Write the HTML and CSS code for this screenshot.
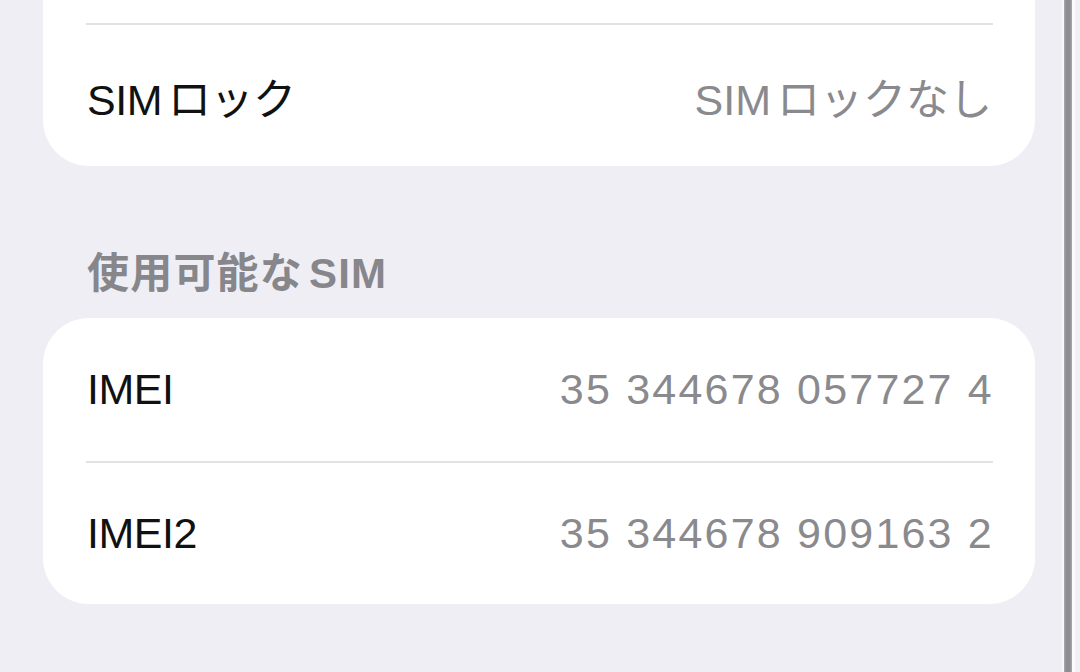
FILE: index.html
```html
<!DOCTYPE html>
<html lang="ja">
<head>
	<meta charset="utf-8">
	<title>情報</title>
	<link rel="stylesheet" href="styles.css">
</head>
<body>
	<div class="screen">
		<div class="group group-top">
			<div class="row"><span class="label"></span></div>
			<div class="row">
				<span class="label"><span class="lat">SIM</span>ロック</span>
				<span class="value"><span class="lat">SIM</span>ロックなし</span>
			</div>
		</div>

		<div class="section-title">使用可能な<span class="lat-l">SIM</span></div>
		<div class="group">
			<div class="row">
				<span class="label">IMEI</span>
				<span class="value num">35 344678 057727 4</span>
			</div>
			<div class="row">
				<span class="label">IMEI2</span>
				<span class="value num">35 344678 909163 2</span>
			</div>
		</div>
	</div>
	<div class="edge">
		<i class="hi"></i>
		<i class="bar"></i>
		<i class="shine"></i>
	</div>
</body>
</html>
```

FILE: styles.css
```css
* {
	margin: 0;
	padding: 0;
	box-sizing: border-box;
}
body {
	display: flex;
	width: 1080px;
	height: 672px;
	overflow: hidden;
	background: #efeef4;
	font-family: "Liberation Sans", "Noto Sans CJK JP", sans-serif;
	color: #111;
}
.screen {
	flex: 1;
	padding: 0 27px 0 43px;
}

/* grouped list card */
.group {
	background: #fff;
	border-radius: 46px;
	overflow: hidden;
}
.group-top {
	margin-top: -120px;
}
.row {
	display: flex;
	align-items: center;
	justify-content: space-between;
	height: 143px;
	padding: 0 43px 0 44px;
	position: relative;
}
.row + .row {
	border-top: 2px solid transparent;
}
.row + .row::before {
	content: "";
	position: absolute;
	top: -2px;
	left: 43px;
	right: 42px;
	height: 2px;
	background: #e2e2e6;
}
.label {
	font-size: 43px;
	letter-spacing: -0.5px;
}
.value {
	font-size: 43px;
	color: #8a8a8e;
}
.value.num {
	letter-spacing: 2.2px;
	margin-right: -2px;
}
.lat {
	margin-right: 6px;
}

.section-title {
	margin: 84px 0 20px 44px;
	height: 48px;
	line-height: 48px;
	font-size: 42px;
	font-weight: 600;
	letter-spacing: 1.2px;
	color: #86868b;
}
.lat-l {
	margin-left: 6px;
}

/* device frame edge on the right */
.edge {
	display: flex;
	width: 18px;
	background: #f1f0f4;
}
.edge i {
	display: block;
}
.edge .hi {
	width: 2px;
	background: #f8f8fa;
}
.edge .bar {
	width: 8px;
	background: linear-gradient(to right, #a9a9ad, #8e8e92 30%, #8e8e92 70%, #a9a9ad);
}
.edge .shine {
	width: 3px;
	background: #fbfbfc;
}
```
